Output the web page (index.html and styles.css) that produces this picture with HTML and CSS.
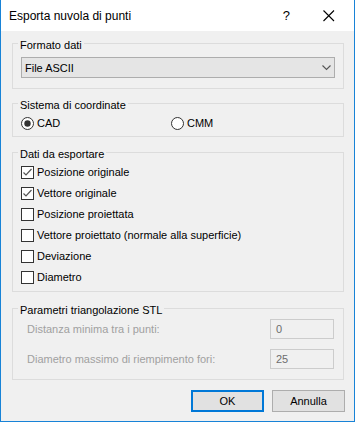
FILE: index.html
```html
<!DOCTYPE html>
<html lang="it">
<head>
  <meta charset="UTF-8" />
  <title>Esporta nuvola di punti</title>
  <link rel="stylesheet" href="styles.css">
</head>
<body>

  <div class="window">

    <div class="titlebar">
      <span class="title">Esporta nuvola di punti</span>
      <span class="help">?</span>
      <svg class="close" width="12" height="12" viewBox="0 0 12 12">
        <path d="M0.5 0.5 L11 11 M11 0.5 L0.5 11" stroke="#000" stroke-width="1.1" fill="none" />
      </svg>
    </div>

    <div class="content">

      <fieldset class="group group-format">
        <legend>Formato dati</legend>
        <div class="combo">
          <span>File ASCII</span>
          <svg width="9" height="6" viewBox="0 0 9 6">
            <path d="M0.5 0.5 L4.5 4.5 L8.5 0.5" stroke="#555" stroke-width="1.1" fill="none" />
          </svg>
        </div>
      </fieldset>

      <fieldset class="group group-coords">
        <legend>Sistema di coordinate</legend>
        <div class="radio-row">
          <label class="opt opt-wide">
            <svg class="radio" width="13" height="13" viewBox="0 0 13 13">
              <circle cx="6.5" cy="6.5" r="6" fill="#fff" stroke="#333" />
              <circle cx="6.5" cy="6.5" r="3.2" fill="#333" />
            </svg>
            CAD
          </label>
          <label class="opt">
            <svg class="radio" width="13" height="13" viewBox="0 0 13 13">
              <circle cx="6.5" cy="6.5" r="6" fill="#fff" stroke="#333" />
            </svg>
            CMM
          </label>
        </div>
      </fieldset>

      <fieldset class="group group-data">
        <legend>Dati da esportare</legend>
        <div class="checks">
          <label class="opt">
            <svg class="check" width="13" height="13" viewBox="0 0 13 13">
              <rect x="0.5" y="0.5" width="12" height="12" fill="#fff" stroke="#333" />
              <path d="M2.5 6.5 L5 9 L10.5 3" stroke="#555" stroke-width="1.2" fill="none" />
            </svg>
            Posizione originale
          </label>
          <label class="opt">
            <svg class="check" width="13" height="13" viewBox="0 0 13 13">
              <rect x="0.5" y="0.5" width="12" height="12" fill="#fff" stroke="#333" />
              <path d="M2.5 6.5 L5 9 L10.5 3" stroke="#555" stroke-width="1.2" fill="none" />
            </svg>
            Vettore originale
          </label>
          <label class="opt">
            <svg class="check" width="13" height="13" viewBox="0 0 13 13">
              <rect x="0.5" y="0.5" width="12" height="12" fill="#fff" stroke="#333" />
            </svg>
            Posizione proiettata
          </label>
          <label class="opt">
            <svg class="check" width="13" height="13" viewBox="0 0 13 13">
              <rect x="0.5" y="0.5" width="12" height="12" fill="#fff" stroke="#333" />
            </svg>
            Vettore proiettato (normale alla superficie)
          </label>
          <label class="opt">
            <svg class="check" width="13" height="13" viewBox="0 0 13 13">
              <rect x="0.5" y="0.5" width="12" height="12" fill="#fff" stroke="#333" />
            </svg>
            Deviazione
          </label>
          <label class="opt">
            <svg class="check" width="13" height="13" viewBox="0 0 13 13">
              <rect x="0.5" y="0.5" width="12" height="12" fill="#fff" stroke="#333" />
            </svg>
            Diametro
          </label>
        </div>
      </fieldset>

      <fieldset class="group group-stl">
        <legend>Parametri triangolazione STL</legend>
        <div class="field">
          <span class="field-label">Distanza minima tra i punti:</span>
          <div class="field-input">0</div>
        </div>
        <div class="field">
          <span class="field-label">Diametro massimo di riempimento fori:</span>
          <div class="field-input">25</div>
        </div>
      </fieldset>

      <div class="buttons">
        <button class="btn btn-default">OK</button>
        <button class="btn">Annulla</button>
      </div>

    </div>
  </div>

</body>
</html>
```

FILE: styles.css
```css
:root {
  --accent: #1883d7;
  --bg: #f0f0f0;
  --group-line: #dcdcdc;
  --text: #000;
  --disabled: #a0a0a0;
}

body {
  margin: 0;
  font-family: 'Liberation Sans', Arial, sans-serif;
  font-size: 11px;
  color: var(--text);
}

.window {
  width: 355px;
  height: 422px;
  box-sizing: border-box;
  border: 1px solid var(--accent);
  border-top: none;
  background: var(--bg);
}

.titlebar {
  height: 31px;
  background: #fff;
  display: flex;
  align-items: center;
  padding: 0 19px 0 8px;
  font-size: 12px;
}

.title {
  flex: 1;
  padding-top: 1px;
}

.help {
  font-size: 13px;
  margin-right: 33px;
}

.close {
  margin-top: 1px;
}

.content {
  padding: 0 10px 0 11px;
}

.group {
  margin: 0;
  padding: 0 8px 0 8px;
  border: 1px solid var(--group-line);
  min-width: 0;
}

.group legend {
  padding: 4px 2px 0;
  margin-left: -3px;
  line-height: 14px;
}

.group-format {
  margin-top: 3px;
  padding-bottom: 10px;
}

.combo {
  margin-top: 5px;
  height: 21px;
  box-sizing: border-box;
  border: 1px solid #adadad;
  background: #e5e5e5;
  display: flex;
  align-items: center;
  justify-content: space-between;
  padding: 0 3px 0 3px;
}

.group-coords {
  margin-top: 5px;
  padding-bottom: 6px;
}

.radio-row {
  margin-top: 5px;
  display: flex;
}

.opt {
  display: flex;
  align-items: center;
  gap: 3px;
  height: 13px;
  line-height: 13px;
}

.opt-wide {
  width: 150px;
}

.group-data {
  margin-top: 6px;
  padding-bottom: 7px;
}

.checks {
  margin-top: 5px;
  display: flex;
  flex-direction: column;
  gap: 8px;
}

.group-stl {
  margin-top: 7px;
  padding: 0 9px 10px 8px;
}

.field {
  display: flex;
  align-items: center;
  height: 20px;
  margin-top: 10px;
}

.field:first-of-type {
  margin-top: 2px;
}

.field-label {
  flex: 1;
  padding-left: 6px;
  color: var(--disabled);
}

.field-input {
  width: 64px;
  height: 20px;
  box-sizing: border-box;
  border: 1px solid #cccccc;
  padding-left: 5px;
  line-height: 18px;
  color: #6d6d6d;
}

.buttons {
  margin-top: 10px;
  margin-right: -1px;
  display: flex;
  justify-content: flex-end;
  gap: 8px;
}

.btn {
  width: 73px;
  height: 22px;
  box-sizing: border-box;
  background: #e1e1e1;
  border: 1px solid #adadad;
  font-family: inherit;
  font-size: 11px;
  color: var(--text);
  padding: 0;
}

.btn-default {
  border: 2px solid #0078d7;
}
```
